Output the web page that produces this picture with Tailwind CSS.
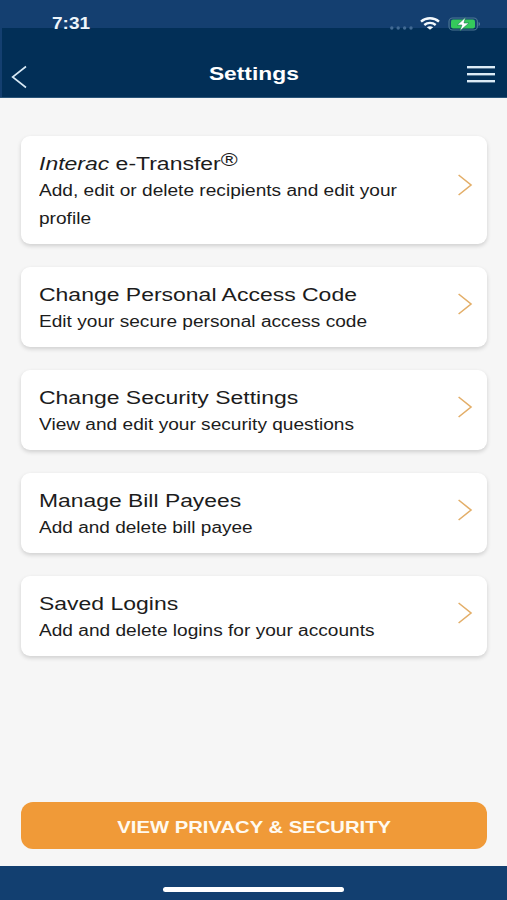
<!DOCTYPE html>
<html lang="en">
<head>
  <meta charset="UTF-8">
  <meta name="viewport" content="width=device-width, initial-scale=1.0">
  <title>Settings</title>
  <script src="https://cdn.jsdelivr.net/npm/@tailwindcss/browser@4"></script>
</head>
<body class="font-['Liberation_Sans',Arial,sans-serif] bg-[#f6f6f6] text-[#1c1c1c]">
<div class="flex flex-col h-[900px] overflow-hidden">

  <!-- STATUS BAR + HEADER -->
  <header class="relative h-[98px] shrink-0 bg-[#022f57] border-b border-[#2a5478] text-white">
    <div class="h-[28px] bg-[#143f70]"></div>
    <div class="absolute left-0 top-[28px] w-[2px] h-[69px] bg-[#143f70]"></div>
    <div class="absolute inset-x-0 top-[14px] h-[20px] flex items-center pl-[52px] pr-[26px]">
      <span class="origin-left scale-x-[1.22] text-[15.6px] font-bold leading-[20px] text-[#eef5fb]">7:31</span>
      <svg class="ml-auto mt-[7px]" width="23" height="4" viewBox="0 0 23 4" fill="#426a93">
        <circle cx="1.8" cy="2" r="1.7"/><circle cx="8.2" cy="2" r="1.7"/><circle cx="14.6" cy="2" r="1.7"/><circle cx="21" cy="2" r="1.7"/>
      </svg>
      <svg class="ml-[7px] -mt-[2px]" width="20" height="13" viewBox="0 0 20 13" fill="none" stroke="#f4f9fd" stroke-width="2.4">
        <path d="M1 4.6C6 .2 14 .2 19 4.6"/>
        <path d="M4.3 8C7.6 5.2 12.4 5.2 15.7 8"/>
        <path d="M10 12.8L6.8 10.2C8.6 8.8 11.4 8.8 13.2 10.2Z" fill="#f4f9fd" stroke="none"/>
      </svg>
      <svg class="ml-[7px] -mt-[1px]" width="34" height="14" viewBox="0 0 34 14">
        <rect x="2" y="1" width="28.4" height="12" rx="3.6" fill="none" stroke="#4d7793" stroke-width="1.1"/>
        <rect x="4" y="2.6" width="24" height="8.8" rx="2" fill="#35c95b"/>
        <path d="M31.6 5v4.2c1.8-.6 1.8-3.6 0-4.2z" fill="#5c7f9c"/>
        <path d="M18.4.4L10.2 8H14.9L13 13.8L22 6H17Z" fill="#fff" stroke="#1d7a58" stroke-width=".6"/>
      </svg>
    </div>
    <div class="absolute inset-x-0 top-[58px] h-[32px] flex items-center justify-between pl-[11px] pr-[12px]">
      <svg class="mt-[5px]" width="17" height="24" viewBox="0 0 17 24" fill="none" stroke="#d8e9f5" stroke-width="1.6">
        <path d="M15 1.5L1.6 12L15 22.5"/>
      </svg>
      <h1 class="ml-[12px] scale-x-[1.22] text-[18.7px] font-bold leading-[32px]">Settings</h1>
      <svg width="28" height="17" viewBox="0 0 28 17" fill="#dcebf6">
        <rect y="0" width="28" height="2.4"/><rect y="7" width="28" height="2.4"/><rect y="14" width="28" height="2.4"/>
      </svg>
    </div>
  </header>

  <!-- SETTINGS LIST -->
  <main class="flex flex-col gap-[22.5px] flex-1 pt-[38px] pl-[21px] pr-[20px]">
    <a class="flex items-center justify-between bg-white rounded-[9px] shadow-[0_2px_4px_rgba(0,0,0,0.16)] pt-[14px] pb-[12px] pl-[18px] pr-[14px]">
      <div class="w-[310px] origin-left scale-x-[1.225]">
        <h2 class="text-[18.75px] leading-[27px] whitespace-nowrap"><i>Interac</i> e-Transfer<span class="relative -top-[4px]">®</span></h2>
        <p class="text-[15.6px] leading-[27.5px]">Add, edit or delete recipients and edit your profile</p>
      </div>
      <svg class="mb-[12px]" width="15" height="22" viewBox="0 0 15 22" fill="none" stroke="#e3ae68" stroke-width="1.6"><path d="M.6 1L13 11L.6 21"/></svg>
    </a>
    <a class="flex items-center justify-between bg-white rounded-[9px] shadow-[0_2px_4px_rgba(0,0,0,0.16)] pt-[14px] pb-[12px] pl-[18px] pr-[14px]">
      <div class="w-[310px] origin-left scale-x-[1.225]">
        <h2 class="text-[18.75px] leading-[27px] whitespace-nowrap">Change Personal Access Code</h2>
        <p class="text-[15.6px] leading-[27.5px]">Edit your secure personal access code</p>
      </div>
      <svg class="mb-[7px]" width="15" height="22" viewBox="0 0 15 22" fill="none" stroke="#e3ae68" stroke-width="1.6"><path d="M.6 1L13 11L.6 21"/></svg>
    </a>
    <a class="flex items-center justify-between bg-white rounded-[9px] shadow-[0_2px_4px_rgba(0,0,0,0.16)] pt-[14px] pb-[12px] pl-[18px] pr-[14px]">
      <div class="w-[310px] origin-left scale-x-[1.225]">
        <h2 class="text-[18.75px] leading-[27px] whitespace-nowrap">Change Security Settings</h2>
        <p class="text-[15.6px] leading-[27.5px]">View and edit your security questions</p>
      </div>
      <svg class="mb-[7px]" width="15" height="22" viewBox="0 0 15 22" fill="none" stroke="#e3ae68" stroke-width="1.6"><path d="M.6 1L13 11L.6 21"/></svg>
    </a>
    <a class="flex items-center justify-between bg-white rounded-[9px] shadow-[0_2px_4px_rgba(0,0,0,0.16)] pt-[14px] pb-[12px] pl-[18px] pr-[14px]">
      <div class="w-[310px] origin-left scale-x-[1.22]">
        <h2 class="text-[18.75px] leading-[27px] whitespace-nowrap">Manage Bill Payees</h2>
        <p class="text-[15.6px] leading-[27.5px]">Add and delete bill payee</p>
      </div>
      <svg class="mb-[7px]" width="15" height="22" viewBox="0 0 15 22" fill="none" stroke="#e3ae68" stroke-width="1.6"><path d="M.6 1L13 11L.6 21"/></svg>
    </a>
    <a class="flex items-center justify-between bg-white rounded-[9px] shadow-[0_2px_4px_rgba(0,0,0,0.16)] pt-[14px] pb-[12px] pl-[18px] pr-[14px]">
      <div class="w-[310px] origin-left scale-x-[1.225]">
        <h2 class="text-[18.75px] leading-[27px] whitespace-nowrap">Saved Logins</h2>
        <p class="text-[15.6px] leading-[27.5px]">Add and delete logins for your accounts</p>
      </div>
      <svg class="mb-[7px]" width="15" height="22" viewBox="0 0 15 22" fill="none" stroke="#e3ae68" stroke-width="1.6"><path d="M.6 1L13 11L.6 21"/></svg>
    </a>

    <button class="mt-auto mb-[17px] h-[47px] shrink-0 rounded-[12px] bg-[#f09a38] text-[#fffaf0] font-bold text-[16.6px] flex items-center justify-center">
      <span class="scale-x-[1.22] pt-[5px]">VIEW PRIVACY &amp; SECURITY</span>
    </button>
  </main>

  <!-- HOME INDICATOR -->
  <footer class="h-[34px] shrink-0 bg-[#123f70] flex justify-center pt-[21px]">
    <div class="w-[181px] h-[5px] rounded-full bg-white"></div>
  </footer>

</div>
</body>
</html>
